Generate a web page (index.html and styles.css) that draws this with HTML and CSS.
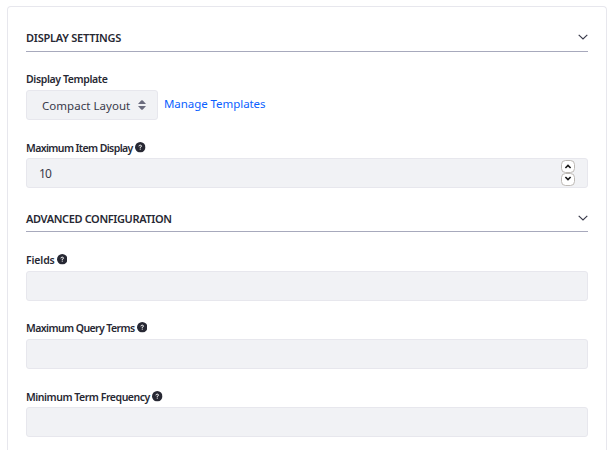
FILE: index.html
```html
<!DOCTYPE html>
<html lang="en">
<head>
<meta charset="utf-8">
<title>Display Settings</title>
<link rel="stylesheet" href="styles.css">
</head>
<body>
<svg class="defs" aria-hidden="true">
  <symbol id="help" viewBox="0 0 10 10"><circle cx="5" cy="5" r="5" fill="#272833"/><path d="M3.7 4.1Q3.8 3 5 3t1.2 1Q6.2 4.6 5 5.1v.6M5 6.3v1" fill="none" stroke="#fff" stroke-width=".95"/></symbol>
  <symbol id="chevron" viewBox="0 0 10 6"><path d="M.7.8 5 5 9.3.8" fill="none" stroke="#393a4a" stroke-width="1.15"/></symbol>
</svg>
<main class="card">
  <h2 class="heading"><span>DISPLAY SETTINGS</span><svg class="chevron"><use href="#chevron"/></svg></h2>
  <section class="group template-group">
    <div class="label"><span class="template-label">Display Template</span></div>
    <div class="row">
      <button class="select"><span>Compact Layout</span><svg class="carets" viewBox="0 0 8 10"><path d="M0 4 3.2.5Q4-.2 4.8.5L8 4ZM0 6h8L4.8 9.5Q4 10.2 3.2 9.5Z" fill="#6b6c7e"/></svg></button>
      <a class="link">Manage Templates</a>
    </div>
  </section>
  <section class="group item-group">
    <div class="label"><span class="item-label">Maximum Item Display</span><svg class="help"><use href="#help"/></svg></div>
    <div class="input number"><span>10</span>
      <div class="spinner">
        <svg class="step" viewBox="0 0 14 13"><rect x=".5" y=".5" width="13" height="12" rx="4" fill="#fff" stroke="#bdb9b4"/><path d="M4.4 8 7 5.4 9.6 8" fill="none" stroke="#181818" stroke-width="1.6"/></svg>
        <svg class="step" viewBox="0 0 14 13"><rect x=".5" y=".5" width="13" height="12" rx="4" fill="#fff" stroke="#bdb9b4"/><path d="M4.4 4 7 6.6 9.6 4" fill="none" stroke="#181818" stroke-width="1.6"/></svg>
      </div>
    </div>
  </section>
  <h2 class="heading advanced"><span>ADVANCED CONFIGURATION</span><svg class="chevron"><use href="#chevron"/></svg></h2>
  <section class="group fields-group">
    <div class="label"><span class="fields-label">Fields</span><svg class="help"><use href="#help"/></svg></div>
    <div class="input"></div>
  </section>
  <section class="group query-group">
    <div class="label"><span class="query-label">Maximum Query Terms</span><svg class="help"><use href="#help"/></svg></div>
    <div class="input"></div>
  </section>
  <section class="group term-group">
    <div class="label"><span class="term-label">Minimum Term Frequency</span><svg class="help"><use href="#help"/></svg></div>
    <div class="input"></div>
  </section>
</main>
</body>
</html>
```
FILE: styles.css
```css
* { box-sizing: border-box; }
html, body { height: 100%; margin: 0; background: #fff; }
body { padding: 6px 6px 0 7px; font: 12px/18px "Noto Sans", sans-serif; color: #272833; }
.defs { position: absolute; width: 0; height: 0; }
.card { height: 444px; padding: 20px 18px 0; border: 1px solid #e7e7ed; border-bottom: 0; border-radius: 4px 4px 0 0; }
.heading { display: flex; justify-content: space-between; height: 25px; margin: 0; border-bottom: 1px solid #a7a9bc; font-size: 11px; line-height: 22px; font-weight: 600; letter-spacing: -.24px; }
.chevron { width: 10px; height: 6px; margin-top: 7px; }
.group { margin-top: 20px; }
.label { display: flex; height: 18px; font-size: 10.5px; font-weight: 600; white-space: nowrap; }
.help { width: 10.5px; height: 10.5px; margin: 3px 0 0 2.3px; }
.template-label { letter-spacing: -.38px; }
.item-label { letter-spacing: -.6px; }
.fields-label { letter-spacing: -.15px; }
.query-label { letter-spacing: -.58px; }
.term-label { letter-spacing: -.46px; }
.template-group { margin-top: 18px; }
.template-group .label { height: 20px; }
.row { display: flex; }
.select { display: flex; align-items: center; justify-content: space-between; width: 132px; height: 30px; padding: 1px 11px 0 15px; border: 1px solid #e7e7ed; border-radius: 3px; background: #f1f2f5; color: #393a4a; font: 11.5px/18px "Noto Sans", sans-serif; letter-spacing: .04px; white-space: nowrap; }
.carets { width: 8px; height: 10px; margin-top: -1px; }
.link { margin: 5px 0 0 6px; color: #0b5fff; font-size: 11.5px; letter-spacing: -.06px; }
.input { height: 30px; border: 1px solid #e7e7ed; border-radius: 3px; background: #f1f2f5; }
.item-group { margin-top: 19px; }
.item-group .label { height: 19px; }
.number { display: flex; justify-content: space-between; padding: 1px 12px; line-height: 28px; color: #393a4a; letter-spacing: -.8px; }
.spinner { display: flex; flex-direction: column; width: 14px; }
.step { width: 14px; height: 13px; }
.advanced { margin-top: 19px; line-height: 24px; }
.advanced .chevron { margin-top: 8px; }
.advanced span { letter-spacing: -.37px; }
.fields-group { margin-top: 19px; }
.fields-group .label { height: 20px; }
.query-group { margin-top: 18px; }
.query-group .label { height: 20px; }
.term-group { margin-top: 19px; }
.term-group .label { height: 19px; }
```
